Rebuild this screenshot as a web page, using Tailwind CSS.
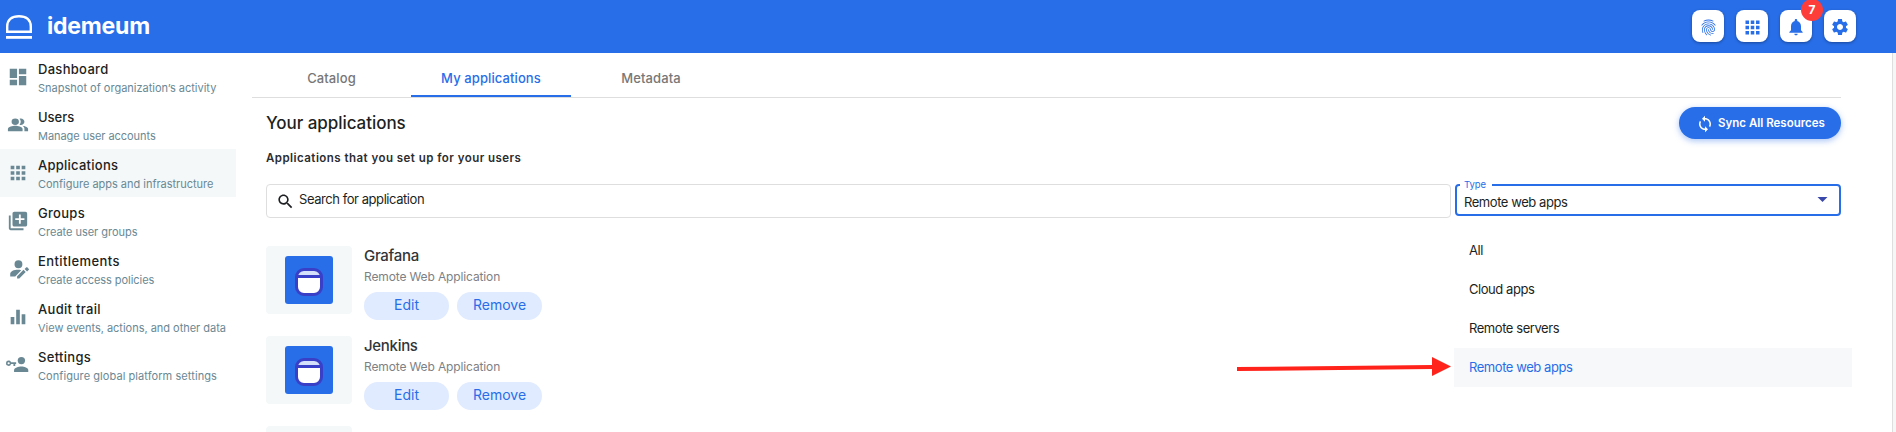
<!DOCTYPE html>
<html lang="en">
<head>
<meta charset="utf-8">
<title>idemeum</title>
<script src="https://cdn.jsdelivr.net/npm/@tailwindcss/browser@4"></script>
</head>
<body class="h-[432px] w-[1896px] overflow-hidden bg-white font-['Inter',sans-serif] text-[#1d1f22]">
<header class="flex h-[53px] items-center justify-between bg-[#286ee8] pl-[6px] pr-10">
  <div class="flex items-center gap-[15px] text-white">
    <svg class="h-[26px] w-[26px]" viewBox="0 0 26 26" fill="none" stroke="currentColor" stroke-width="2.4"><path d="M1.200 17.800V12.500C1.200 5.500 6 2.200 13 2.200s11.800 3.300 11.800 10.300v5.300z"/><path d="M0 23.400h26" stroke-width="2.800"/></svg>
    <span class="relative -top-px text-[23px] leading-8 font-bold tracking-[-0.2px]">idemeum</span>
  </div>
  <div class="flex gap-3 pb-px text-[#286ee8]">
    <button class="flex size-8 items-center justify-center rounded-lg bg-white pt-0.5 shadow-[0_1px_3px_rgba(0,0,0,0.35)]"><svg class="size-[19px]" viewBox="0 0 24 24" fill="currentColor"><path d="M17.81 4.47c-.08 0-.16-.02-.23-.06C15.66 3.42 14 3 12.01 3c-1.98 0-3.86.47-5.57 1.41-.24.13-.54.04-.68-.2-.13-.24-.04-.55.2-.68C7.82 2.52 9.86 2 12.01 2c2.13 0 3.99.47 6.03 1.52.25.13.34.43.21.67-.09.18-.26.28-.44.28zM3.5 9.72c-.1 0-.2-.03-.29-.09-.23-.16-.28-.47-.12-.7.99-1.4 2.25-2.5 3.75-3.27C9.98 4.04 14 4.03 17.15 5.65c1.5.77 2.76 1.86 3.75 3.25.16.22.11.54-.12.7-.23.16-.54.11-.7-.12-.9-1.26-2.04-2.25-3.39-2.94-2.87-1.47-6.54-1.47-9.4.01-1.36.7-2.5 1.7-3.4 2.96-.08.14-.23.21-.39.21zm6.25 12.07c-.13 0-.26-.05-.35-.15-.87-.87-1.34-1.43-2.01-2.64-.69-1.23-1.05-2.73-1.05-4.34 0-2.97 2.54-5.39 5.66-5.39s5.66 2.42 5.66 5.39c0 .28-.22.5-.5.5s-.5-.22-.5-.5c0-2.42-2.09-4.39-4.66-4.39s-4.66 1.97-4.66 4.39c0 1.44.32 2.77.93 3.85.64 1.15 1.08 1.64 1.85 2.42.19.2.19.51 0 .71-.11.1-.24.15-.37.15zm7.17-1.85c-1.19 0-2.24-.3-3.1-.89-1.49-1.01-2.38-2.65-2.38-4.39 0-.28.22-.5.5-.5s.5.22.5.5c0 1.41.72 2.74 1.94 3.56.71.48 1.54.71 2.54.71.24 0 .64-.03 1.04-.1.27-.05.53.13.58.41.05.27-.13.53-.41.58-.57.11-1.07.12-1.21.12zM14.91 22c-.04 0-.09-.01-.13-.02-1.59-.44-2.63-1.03-3.72-2.1-1.4-1.39-2.17-3.24-2.17-5.22 0-1.62 1.38-2.94 3.08-2.94s3.08 1.32 3.08 2.94c0 1.07.93 1.94 2.08 1.94s2.08-.87 2.08-1.94c0-3.77-3.25-6.83-7.25-6.83-2.84 0-5.44 1.58-6.61 4.03-.39.81-.59 1.76-.59 2.8 0 .78.07 2.01.67 3.61.1.26-.03.55-.29.64-.26.1-.55-.04-.64-.29-.49-1.31-.73-2.61-.73-3.96 0-1.2.23-2.29.68-3.24 1.33-2.79 4.28-4.6 7.51-4.6 4.55 0 8.25 3.51 8.25 7.83 0 1.62-1.38 2.94-3.08 2.94s-3.08-1.32-3.08-2.94c0-1.07-.93-1.94-2.08-1.94s-2.08.87-2.08 1.94c0 1.71.66 3.31 1.87 4.51.95.94 1.86 1.46 3.27 1.85.27.07.42.35.35.61-.05.23-.26.38-.47.38z"/></svg></button>
    <button class="flex size-8 items-center justify-center rounded-lg bg-white pt-0.5 shadow-[0_1px_3px_rgba(0,0,0,0.35)]"><svg class="size-[21px]" viewBox="0 0 24 24" fill="currentColor"><path d="M4 8h4V4H4zm6 12h4v-4h-4zm-6 0h4v-4H4zm0-6h4v-4H4zm6 0h4v-4h-4zm6-10v4h4V4zm-6 4h4V4h-4zm6 6h4v-4h-4zm0 6h4v-4h-4z"/></svg></button>
    <button class="relative flex size-8 items-center justify-center rounded-lg bg-white pt-0.5 shadow-[0_1px_3px_rgba(0,0,0,0.35)]"><svg class="size-5" viewBox="0 0 24 24" fill="currentColor"><path d="M12 22c1.1 0 2-.9 2-2h-4c0 1.1.89 2 2 2zm6-6v-5c0-3.07-1.64-5.64-4.5-6.32V4c0-.83-.67-1.5-1.5-1.5s-1.5.67-1.5 1.5v.68C7.63 5.36 6 7.92 6 11v5l-2 2v1h16v-1z"/></svg>
      <span class="absolute -top-[11px] left-[21px] z-10 flex size-[22px] items-center justify-center rounded-full bg-[#fd3d3a] text-[12px] font-bold text-white">7</span></button>
    <button class="flex size-8 items-center justify-center rounded-lg bg-white pt-0.5 shadow-[0_1px_3px_rgba(0,0,0,0.35)]"><svg class="size-5" viewBox="0 0 24 24" fill="currentColor"><path d="M19.14 12.94c.04-.3.06-.61.06-.94 0-.32-.02-.64-.07-.94l2.03-1.58c.18-.14.23-.41.12-.61l-1.92-3.32c-.12-.22-.37-.29-.59-.22l-2.39.96c-.5-.38-1.03-.7-1.62-.94l-.36-2.54c-.04-.24-.24-.41-.48-.41h-3.84c-.24 0-.43.17-.47.41l-.36 2.54c-.59.24-1.13.57-1.62.94l-2.39-.96c-.22-.08-.47 0-.59.22L2.74 8.87c-.12.21-.08.47.12.61l2.03 1.58c-.05.3-.09.63-.09.94s.02.64.07.94l-2.03 1.58c-.18.14-.23.41-.12.61l1.92 3.32c.12.22.37.29.59.22l2.39-.96c.5.38 1.03.7 1.62.94l.36 2.54c.05.24.24.41.48.41h3.84c.24 0 .44-.17.47-.41l.36-2.54c.59-.24 1.13-.56 1.62-.94l2.39.96c.22.08.47 0 .59-.22l1.92-3.32c.12-.22.07-.47-.12-.61zM12 15.6c-1.98 0-3.6-1.62-3.6-3.6s1.62-3.6 3.6-3.6 3.6 1.62 3.6 3.6-1.62 3.6-3.6 3.6z"/></svg></button>
  </div>
</header>
<div class="flex h-[379px]">
  <nav class="w-[236px] shrink-0 text-[13px] font-medium tracking-[0.3px] whitespace-nowrap">
    <a class="flex h-12 items-center gap-[9px] pl-[7px]"><svg class="size-[22px] shrink-0 fill-[#6a8894]" viewBox="0 0 24 24"><path d="M3 13h8V3H3zm0 8h8v-6H3zm10 0h8V11h-8zm0-18v6h8V3z"/></svg><span class="pt-[3px] leading-[19px]">Dashboard<small class="block text-[11px] font-normal tracking-normal text-[#6a8894]">Snapshot of organization’s activity</small></span></a>
    <a class="flex h-12 items-center gap-[9px] pl-[7px]"><svg class="size-[22px] shrink-0 fill-[#6a8894]" viewBox="0 0 24 24"><path d="M16.670 13.130C18.040 14.060 19 15.320 19 17v3h4v-3c0-2.180-3.570-3.470-6.330-3.870z M9 4a4 4 0 1 0 0 8 4 4 0 0 0 0-8z M15 12c2.210 0 4-1.790 4-4s-1.790-4-4-4c-.47 0-.91.1-1.330.24C14.500 5.270 15 6.580 15 8s-.5 2.730-1.330 3.760c.42.14.86.24 1.330.24z M9 13c-2.670 0-8 1.340-8 4v3h16v-3c0-2.660-5.330-4-8-4z" transform="translate(0 1.600) scale(1 .86)"/></svg><span class="pt-[3px] leading-[19px]"><span class="tracking-normal">Users</span><small class="block text-[11px] font-normal tracking-[-0.05px] text-[#6a8894]">Manage user accounts</small></span></a>
    <a class="flex h-12 items-center gap-[9px] bg-[#f4f8f9] pl-[7px]"><svg class="size-[22px] shrink-0 fill-[#6a8894]" viewBox="0 0 24 24"><path d="M4 8h4V4H4zm6 12h4v-4h-4zm-6 0h4v-4H4zm0-6h4v-4H4zm6 0h4v-4h-4zm6-10v4h4V4zm-6 4h4V4h-4zm6 6h4v-4h-4zm0 6h4v-4h-4z"/></svg><span class="pt-[3px] leading-[19px]"><span class="tracking-[0.25px]">Applications</span><small class="block text-[11px] font-normal tracking-[-0.02px] text-[#6a8894]">Configure apps and infrastructure</small></span></a>
    <a class="flex h-12 items-center gap-[9px] pl-[7px]"><svg class="size-[22px] shrink-0 fill-[#6a8894]" viewBox="0 0 24 24"><path d="M4 6H2v14c0 1.100.9 2 2 2h14v-2H4zm16-4H8c-1.100 0-2 .9-2 2v12c0 1.100.9 2 2 2h12c1.100 0 2-.9 2-2V4c0-1.100-.9-2-2-2zm-1 9h-4v4h-2v-4H9V9h4V5h2v4h4z"/></svg><span class="pt-[3px] leading-[19px]"><span class="tracking-[0.3px]">Groups</span><small class="block text-[11px] font-normal tracking-[-0.03px] text-[#6a8894]">Create user groups</small></span></a>
    <a class="flex h-12 items-center gap-[9px] pl-[7px]"><svg class="size-[22px] shrink-0 overflow-visible fill-[#6a8894]" viewBox="0 0 24 24"><path d="M12.500 2.500a4.300 4.300 0 1 0 0 8.600 4.300 4.300 0 0 0 0-8.600z M15.500 13.400C11 12 3.500 13.500 3.500 17.500v2.800h5.500z M11 19.900v2.400h2.400l7-7-2.400-2.400zM23.800 11.900l-1.700-1.700c-.3-.3-.7-.3-1 0l-1.900 1.900 2.700 2.700 1.900-1.900c.3-.3.300-.7 0-1z"/></svg><span class="pt-[3px] leading-[19px]"><span class="tracking-[0.4px]">Entitlements</span><small class="block text-[11px] font-normal tracking-[-0.05px] text-[#6a8894]">Create access policies</small></span></a>
    <a class="flex h-12 items-center gap-[9px] pl-[7px]"><svg class="size-[22px] shrink-0 fill-[#6a8894]" viewBox="0 0 24 24"><path d="M10 20h4V4h-4zm-6 0h4v-8H4zM16 9v11h4V9z"/></svg><span class="pt-[3px] leading-[19px]">Audit trail<small class="block text-[11px] font-normal tracking-[-0.02px] text-[#6a8894]">View events, actions, and other data</small></span></a>
    <a class="flex h-12 items-center gap-[9px] pl-[7px]"><svg class="size-[22px] shrink-0 overflow-visible fill-[#6a8894]" viewBox="0 0 24 24"><circle cx="15.700" cy="7.200" r="4"/><path d="M7.700 19.500v-2c0-2.600 5-4 8-4s7.500 1.400 7.500 4v2z"/><path fill-rule="evenodd" d="M1.800 7.200c1.200 0 2.200.7 2.700 1.800H10v2H9v2H7v-2H4.500a2.900 2.900 0 1 1-2.700-3.800zm0 1.700a1.200 1.200 0 1 0 0 2.400 1.200 1.200 0 0 0 0-2.400z"/></svg><span class="pt-[3px] leading-[19px]">Settings<small class="block text-[11px] font-normal tracking-[0.07px] text-[#6a8894]">Configure global platform settings</small></span></a>
  </nav>
  <main class="ml-4 w-[1589px] shrink-0">
    <div class="flex h-[45px] border-b border-[#dedede] text-[13px] font-medium tracking-[0.1px] text-[#777]">
      <div class="flex w-[159px] items-center justify-center pt-[7px]">Catalog</div>
      <div class="flex w-[160px] items-center justify-center border-b-2 border-[#286ee8] pt-[9px] text-[#286ee8]">My applications</div>
      <div class="flex w-[160px] items-center justify-center pt-[7px]">Metadata</div>
    </div>
    <div class="pl-[14px]">
      <div class="flex h-[43px] items-start justify-between">
        <h1 class="mt-[13px] text-[17px] leading-6 font-medium tracking-[-0.05px]">Your applications</h1>
        <button class="mt-[9px] flex h-8 w-[162px] items-center gap-1 rounded-full bg-[#286ee8] pt-px pl-[17px] text-[11.5px] font-semibold text-white shadow-[0_2px_6px_rgba(40,110,232,0.4)]"><svg class="size-[18px]" viewBox="0 0 24 24" fill="currentColor"><path d="M12 4V1L8 5l4 4V6c3.310 0 6 2.690 6 6 0 1.010-.25 1.970-.7 2.800l1.460 1.460C19.540 15.030 20 13.570 20 12c0-4.420-3.580-8-8-8zm0 14c-3.310 0-6-2.690-6-6 0-1.010.25-1.970.7-2.800L5.240 7.740C4.460 8.970 4 10.430 4 12c0 4.420 3.580 8 8 8v3l4-4-4-4z"/></svg>Sync All Resources</button>
      </div>
      <h2 class="mt-2 text-[11.5px] leading-[18px] font-semibold tracking-[0.46px] text-[#2b2d30]">Applications that you set up for your users</h2>
      <div class="mt-[17px] flex items-start gap-1">
        <div class="flex h-[34px] w-[1185px] items-center gap-1 rounded border border-[#dedede] pl-[9px] text-[13px] tracking-[-0.44px]"><svg class="size-[19px]" viewBox="0 0 24 24" fill="currentColor"><path d="M15.500 14h-.79l-.28-.27C15.410 12.590 16 11.110 16 9.500 16 5.910 13.090 3 9.500 3S3 5.910 3 9.500 5.910 16 9.500 16c1.610 0 3.090-.59 4.230-1.570l.27.28v.79l5 4.990L20.490 19zm-6 0C7.010 14 5 11.990 5 9.500S7.010 5 9.500 5 14 7.010 14 9.500 11.990 14 9.500 14z"/></svg><span class="pb-0.5">Search for application</span></div>
        <div class="relative flex h-8 w-[386px] items-center justify-between rounded border-2 border-[#286ee8] pr-[11px] pl-[7px] text-[13px] tracking-[-0.44px]">
          <span class="pt-[5px]">Remote web apps</span>
          <svg class="mb-px h-[5px] w-[11px] fill-[#3949ab]" viewBox="0 0 10 5"><path d="M0 0h10L5 5z"/></svg>
          <span class="absolute -top-[7px] left-[3px] w-8 bg-white pl-1 text-[9.5px] leading-3 tracking-[-0.1px] text-[#286ee8]">Type</span>
          <ul class="absolute top-[45px] -left-[3px] w-[398px] bg-white text-[13px] leading-[39px]">
            <li class="h-[39px] pl-[15px] leading-[38px]">All</li>
            <li class="h-[39px] pl-[15px] leading-[38px]">Cloud apps</li>
            <li class="h-[39px] pl-[15px] leading-[38px]">Remote servers</li>
            <li class="relative h-[39px] bg-[#f6f8fa] pl-[15px] leading-[38px] text-[#286ee8]">Remote web apps
              <svg class="absolute top-[9px] -left-[217px] h-5 w-[215px]" viewBox="0 0 215 20"><path d="M0 12 195 10" stroke="#ff231b" stroke-width="4"/><path d="M195 0 214 9.500 195 19z" fill="#ff231b"/></svg></li>
          </ul>
        </div>
      </div>
      <div class="mt-7 flex h-[186px] flex-col gap-[22px] overflow-hidden text-[#323538]">
        <div class="flex h-[68px] shrink-0 gap-3">
          <div class="flex w-[86px] items-center justify-center rounded bg-[#f4f8f9]"><svg class="size-12" viewBox="0 0 48 48"><rect width="48" height="48" rx="3" fill="#286ee8"/><rect x="11.500" y="13.500" width="25" height="25" rx="7.500" fill="#fff"/><path d="M12 20c0-4 3-6.500 7-6.500h10c4 0 7 2.500 7 6.500z" fill="#d4dff9"/><rect x="11.500" y="13.500" width="25" height="25" rx="7.500" fill="none" stroke="#3a3fc8" stroke-width="3"/><path d="M11.500 20.500h25" stroke="#3a3fc8" stroke-width="3"/></svg></div>
          <div class="-mt-0.5"><div class="text-[15px] leading-[23px] font-medium tracking-[-0.3px]">Grafana</div><div class="text-[12px] leading-5 tracking-[-0.13px] text-[#7d8185]">Remote Web Application</div>
            <div class="mt-[5px] flex gap-2 text-[14px] leading-[26px] text-[#286ee8]"><button class="flex h-7 w-[85px] justify-center rounded-full bg-[#e0ebff]">Edit</button><button class="flex h-7 w-[85px] justify-center rounded-full bg-[#e0ebff]">Remove</button></div></div>
        </div>
        <div class="flex h-[68px] shrink-0 gap-3">
          <div class="flex w-[86px] items-center justify-center rounded bg-[#f4f8f9]"><svg class="size-12" viewBox="0 0 48 48"><rect width="48" height="48" rx="3" fill="#286ee8"/><rect x="11.500" y="13.500" width="25" height="25" rx="7.500" fill="#fff"/><path d="M12 20c0-4 3-6.500 7-6.500h10c4 0 7 2.500 7 6.500z" fill="#d4dff9"/><rect x="11.500" y="13.500" width="25" height="25" rx="7.500" fill="none" stroke="#3a3fc8" stroke-width="3"/><path d="M11.500 20.500h25" stroke="#3a3fc8" stroke-width="3"/></svg></div>
          <div class="-mt-0.5"><div class="text-[15px] leading-[23px] font-medium tracking-[-0.3px]">Jenkins</div><div class="text-[12px] leading-5 tracking-[-0.13px] text-[#7d8185]">Remote Web Application</div>
            <div class="mt-[5px] flex gap-2 text-[14px] leading-[26px] text-[#286ee8]"><button class="flex h-7 w-[85px] justify-center rounded-full bg-[#e0ebff]">Edit</button><button class="flex h-7 w-[85px] justify-center rounded-full bg-[#e0ebff]">Remove</button></div></div>
        </div>
        <div class="h-[68px] w-[86px] shrink-0 rounded bg-[#f4f8f9]"></div>
      </div>
    </div>
  </main>
  <div class="ml-auto w-1 border-l border-[#dedede] bg-[#f6f6f6]"></div>
</div>
</body>
</html>
